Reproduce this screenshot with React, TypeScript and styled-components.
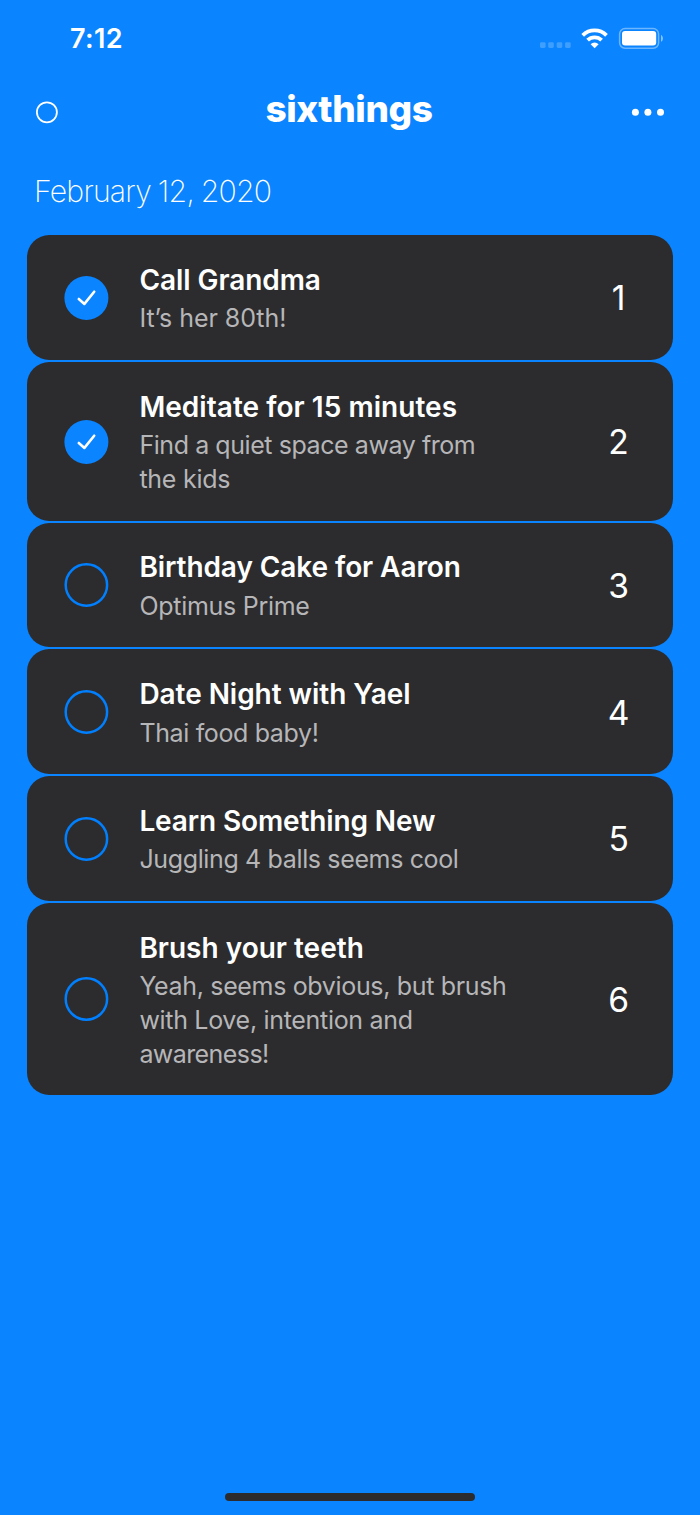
import React from "react";
import styled, { createGlobalStyle } from "styled-components";

const GlobalStyle = createGlobalStyle`
  * { box-sizing: border-box; }
  html, body { margin: 0; padding: 0; background: #0a84ff; }
  body { font-family: Inter, "Liberation Sans", sans-serif; color: #fff; font-kerning: normal; }
`;

const Screen = styled.main`
  width: 700px;
  height: 1515px;
  display: flex;
  flex-direction: column;
  background: #0a84ff;
  overflow: hidden;
`;

const StatusBar = styled.div`
  height: 76px;
  padding: 0 36px 0 70px;
  display: flex;
  align-items: center;
  justify-content: space-between;
`;

const Clock = styled.time`
  font-size: 27px;
  font-weight: 600;
  line-height: 32px;
  padding-top: 2px;
  letter-spacing: 0.4px;
`;

const NavBar = styled.header`
  height: 72px;
  padding: 0 35px;
  display: grid;
  grid-template-columns: 60px 1fr 60px;
  align-items: center;
`;

const NavButton = styled.button<{ $end?: boolean }>`
  display: flex;
  justify-content: ${(p) => (p.$end ? "flex-end" : "flex-start")};
  padding: 0;
  border: 0;
  background: none;
  color: inherit;
`;

const AppName = styled.h1`
  margin: 0;
  padding: 0 2px 6px 0;
  text-align: center;
  font-size: 37px;
  font-weight: 800;
  line-height: 44px;
  letter-spacing: -0.4px;
`;

const Today = styled.p`
  margin: 0;
  padding: 24px 0 0 34px;
  height: 87.3px;
  font-size: 30.2px;
  font-weight: 160;
  line-height: 38px;
  letter-spacing: -0.78px;
  word-spacing: -1px;
`;

const TaskList = styled.ul`
  list-style: none;
  margin: 0;
  padding: 0 27.4px;
  display: flex;
  flex-direction: column;
  gap: 2.1px;
`;

const TaskCard = styled.li`
  display: grid;
  grid-template-columns: 75px 1fr 34px;
  align-items: center;
  padding: 25.5px 37px 23.8px;
  border-radius: 22.4px;
  background: #2c2c2e;
`;

const Checkbox = styled.svg`
  display: block;
  margin-top: -1px;
`;

const TaskText = styled.div`
  display: flex;
  flex-direction: column;
  gap: 3px;
`;

const TaskTitle = styled.h2<{ $tracking: number }>`
  margin: 0;
  font-size: 28px;
  font-weight: 600;
  line-height: 38.6px;
  white-space: nowrap;
  letter-spacing: ${(p) => p.$tracking}px;
`;

const TaskNote = styled.p`
  margin: 0;
  font-size: 25px;
  font-weight: 400;
  line-height: 33.8px;
  color: #b6b6b8;
`;

const NoteLine = styled.span<{ $tracking: number }>`
  display: block;
  white-space: nowrap;
  letter-spacing: ${(p) => p.$tracking}px;
`;

const TaskNumber = styled.span`
  justify-self: center;
  font-size: 33.6px;
  line-height: 40px;
`;

const BottomArea = styled.footer`
  margin-top: auto;
  padding-bottom: 13.6px;
  display: flex;
  justify-content: center;
`;

const HomeIndicator = styled.div`
  width: 250px;
  height: 8.6px;
  border-radius: 5px;
  background: #2c2c2e;
`;

type Line = { text: string; tracking: number };
type Task = { title: Line; note: Line[]; done: boolean };

const tasks: Task[] = [
  {
    title: { text: "Call Grandma", tracking: -0.06 },
    note: [{ text: "It’s her 80th!", tracking: -0.05 }],
    done: true,
  },
  {
    title: { text: "Meditate for 15 minutes", tracking: 0.04 },
    note: [
      { text: "Find a quiet space away from", tracking: -0.43 },
      { text: "the kids", tracking: -0.25 },
    ],
    done: true,
  },
  {
    title: { text: "Birthday Cake for Aaron", tracking: -0.08 },
    note: [{ text: "Optimus Prime", tracking: -0.28 }],
    done: false,
  },
  {
    title: { text: "Date Night with Yael", tracking: -0.05 },
    note: [{ text: "Thai food baby!", tracking: -0.36 }],
    done: false,
  },
  {
    title: { text: "Learn Something New", tracking: -0.13 },
    note: [{ text: "Juggling 4 balls seems cool", tracking: -0.36 }],
    done: false,
  },
  {
    title: { text: "Brush your teeth", tracking: 0 },
    note: [
      { text: "Yeah, seems obvious, but brush", tracking: -0.34 },
      { text: "with Love, intention and", tracking: -0.31 },
      { text: "awareness!", tracking: -0.58 },
    ],
    done: false,
  },
];

const StatusIcons = () => (
  <svg width="124" height="24" viewBox="540 26 124 24" fill="none" aria-label="Wi-Fi connected, battery full">
    <g fill="#fff" fillOpacity="0.22">
      <rect x="540" y="42.2" width="5.6" height="5.8" rx="1.4" />
      <rect x="548.2" y="42.2" width="5.6" height="5.8" rx="1.4" />
      <rect x="556.7" y="42.2" width="5.6" height="5.8" rx="1.4" />
      <rect x="565.1" y="42.2" width="5.6" height="5.8" rx="1.4" />
    </g>
    <g stroke="#fff" strokeWidth="3.8">
      <path d="M582.7 35.3a17 17 0 0 1 23.8 0" />
      <path d="M587.6 40.2a10 10 0 0 1 14 0" />
    </g>
    <path d="M594.6 48.3l-4-4.1a5.8 5.8 0 0 1 8 0z" fill="#fff" />
    <rect x="619.6" y="28.6" width="39" height="19.6" rx="5.4" stroke="#fff" strokeOpacity="0.4" strokeWidth="1.5" />
    <rect x="622" y="31" width="34.2" height="14.6" rx="3" fill="#fff" />
    <path d="M661 35v6.8c2.6-1.2 2.6-5.6 0-6.8z" fill="#fff" fillOpacity="0.5" />
  </svg>
);

const TaskCheckbox = ({ done }: { done: boolean }) => (
  <Checkbox width="45" height="44" viewBox="0 0 45 44" fill="none">
    {done ? (
      <>
        <circle cx="22.4" cy="22" r="22" fill="#0a84ff" />
        <path d="M14.8 23l5.6 4.9L30.2 15.7" stroke="#fff" strokeWidth="2.6" strokeLinecap="round" strokeLinejoin="round" />
      </>
    ) : (
      <circle cx="22.4" cy="22" r="20.7" stroke="#007fff" strokeWidth="2.5" />
    )}
  </Checkbox>
);

export default function App() {
  return (
    <>
      <GlobalStyle />
      <Screen>
        <StatusBar>
          <Clock>7:12</Clock>
          <StatusIcons />
        </StatusBar>
        <NavBar>
          <NavButton aria-label="Toggle theme">
            <svg width="24" height="24" viewBox="0 0 24 24" fill="none">
              <circle cx="11.9" cy="12.3" r="10" stroke="#fff" strokeWidth="1.8" />
            </svg>
          </NavButton>
          <AppName>sixthings</AppName>
          <NavButton $end aria-label="More">
            <svg width="34" height="8" viewBox="0 0 34 8" fill="#fff">
              <circle cx="4.4" cy="4.3" r="3.5" />
              <circle cx="16.9" cy="4.3" r="3.5" />
              <circle cx="29.5" cy="4.3" r="3.5" />
            </svg>
          </NavButton>
        </NavBar>
        <Today>February 12, 2020</Today>
        <TaskList>
          {tasks.map((task, index) => (
            <TaskCard key={task.title.text}>
              <TaskCheckbox done={task.done} />
              <TaskText>
                <TaskTitle $tracking={task.title.tracking}>{task.title.text}</TaskTitle>
                <TaskNote>
                  {task.note.map((line) => (
                    <NoteLine key={line.text} $tracking={line.tracking}>
                      {line.text}
                    </NoteLine>
                  ))}
                </TaskNote>
              </TaskText>
              <TaskNumber>{index + 1}</TaskNumber>
            </TaskCard>
          ))}
        </TaskList>
        <BottomArea>
          <HomeIndicator />
        </BottomArea>
      </Screen>
    </>
  );
}
